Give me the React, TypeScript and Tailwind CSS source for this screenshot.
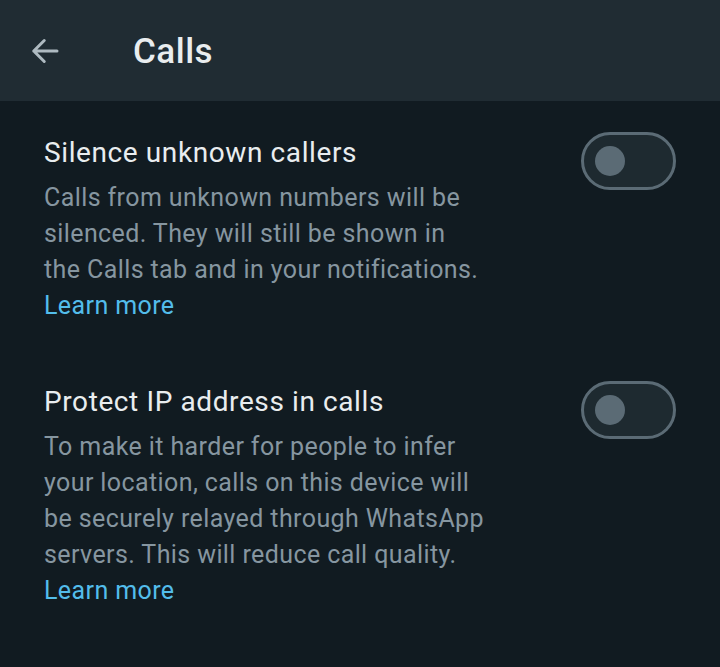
import React from "react";

const font = { fontFamily: "Roboto, 'Noto Sans', sans-serif" };

export default function App() {
  return (
    <div className="w-[720px] h-[667px] bg-[#111b21] overflow-hidden" style={font}>
      <Header />
      <div className="flex flex-col">
        <SettingRow
          title="Silence unknown callers"
          lines={[
            "Calls from unknown numbers will be",
            "silenced. They will still be shown in",
            "the Calls tab and in your notifications.",
          ]}
          className="pt-[31px]"
        />
        <SettingRow
          title="Protect IP address in calls"
          lines={[
            "To make it harder for people to infer",
            "your location, calls on this device will",
            "be securely relayed through WhatsApp",
            "servers. This will reduce call quality.",
          ]}
          className="pt-[57px]"
        />
      </div>
    </div>
  );
}

function Header() {
  return (
    <div className="h-[101px] bg-[#202c33] flex items-center">
      <div className="w-[133px] flex items-center pl-[27px]">
        <svg
          xmlns="http://www.w3.org/2000/svg"
          viewBox="0 0 24 24"
          fill="none"
          stroke="#aebac1"
          strokeWidth={2}
          strokeLinecap="round"
          strokeLinejoin="round"
          className="w-[36px] h-[36px]"
        >
          <path d="M20 12H4.5M11.5 5l-7 7 7 7" />
        </svg>
      </div>
      <h1 className="text-[35px] tracking-[0.5px] font-medium text-[#e9edef] leading-none pt-[2px]">
        Calls
      </h1>
    </div>
  );
}

function SettingRow({
  title,
  lines,
  className,
}: {
  title: string;
  lines: string[];
  className?: string;
}) {
  return (
    <div className={"flex justify-between items-start pl-[44px] pr-[44px] " + className}>
      <div className="pt-[3px]">
        <p className="text-[28px] tracking-[0.6px] leading-[36px] text-[#e9edef]">{title}</p>
        <div className="mt-[9px] text-[25px] tracking-[0.4px] leading-[36px] text-[#8696a0]">
          {lines.map((l) => (
            <p key={l} className="whitespace-nowrap">
              {l}
            </p>
          ))}
          <p className="text-[#53bdeb]">Learn more</p>
        </div>
      </div>
      <Toggle />
    </div>
  );
}

function Toggle() {
  return (
    <div className="w-[95px] h-[58px] rounded-full border-[3px] border-[#5b6b75] bg-[#1e2a30] flex items-center pl-[11px] shrink-0">
      <div className="w-[30px] h-[30px] rounded-full bg-[#5b6b75]" />
    </div>
  );
}
